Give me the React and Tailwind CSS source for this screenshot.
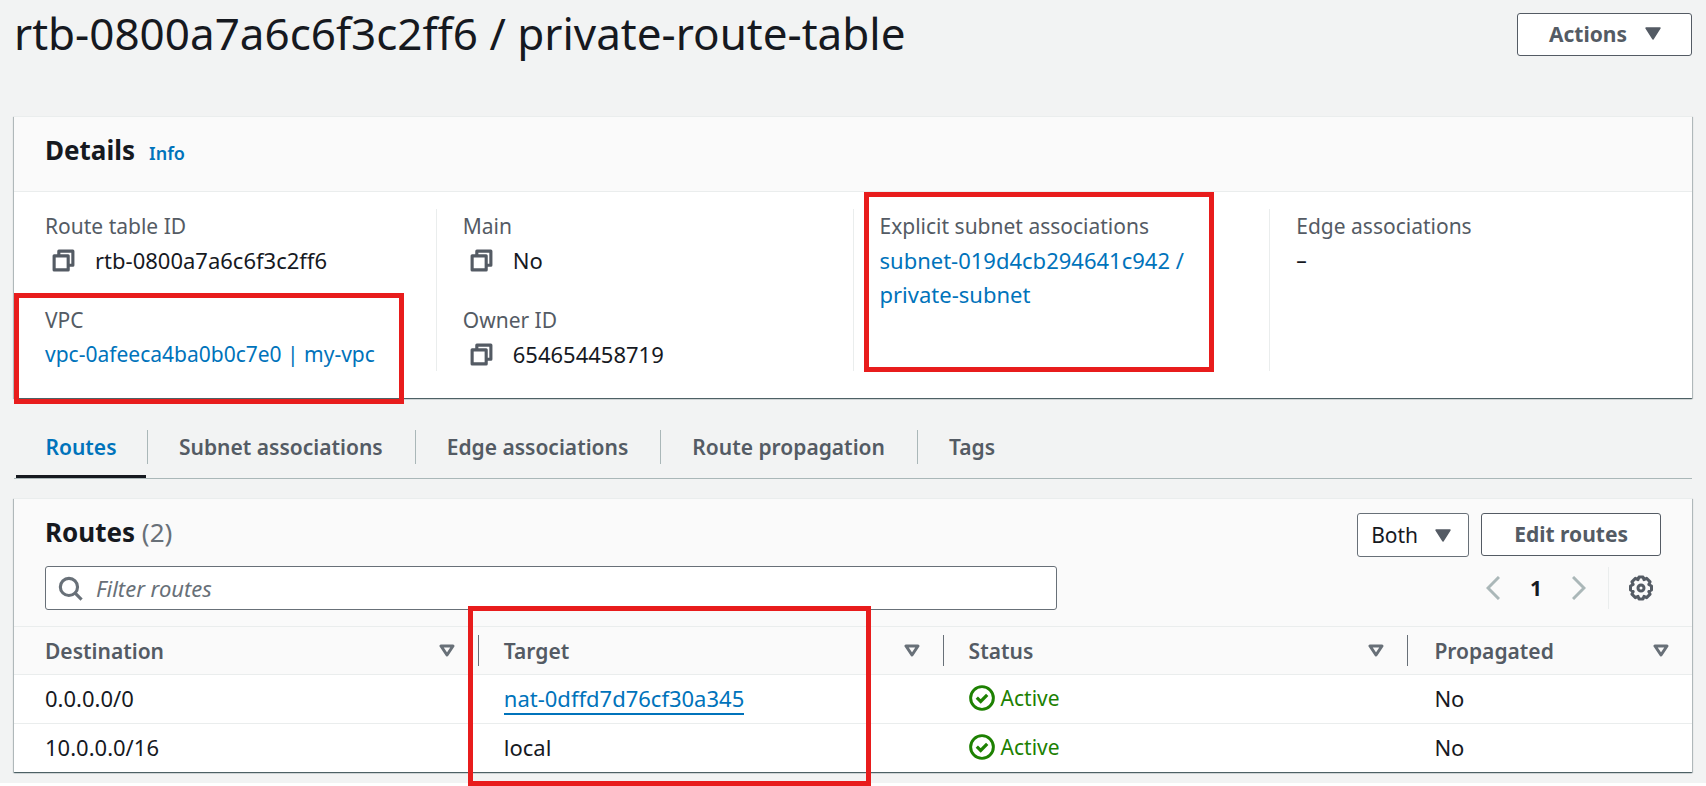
const COPY = (
  <svg viewBox="0 0 16 16" className="h-[25px] w-[25px]" fill="none" stroke="#545b64" strokeWidth="2" strokeLinejoin="round" aria-hidden="true">
    <path d="M2 5h9v9H2z" />
    <path d="M5 5V2h9v9h-3" />
  </svg>
);

function CopyValue({ children }) {
  return (
    <div className="flex items-center text-[22px]">
      <button type="button" aria-label={`Copy ${children}`} className="mr-[19px] ml-[6px] flex h-[25px] items-center">
        {COPY}
      </button>
      <span>{children}</span>
    </div>
  );
}

function Field({ label, children }) {
  return (
    <div className="relative">
      <div className="text-[#545b64]">{label}</div>
      {children}
    </div>
  );
}

function Column({ children, first }) {
  return (
    <div className={`relative flex flex-col gap-[26px] border-l pr-[27px] ${first ? "border-transparent pl-[25px]" : "border-[#eaeded] pl-[26px]"}`}>
      {children}
    </div>
  );
}

function CaretDown({ className = "" }) {
  return (
    <svg viewBox="0 0 16 13" className={`h-[13px] w-4 ${className}`} aria-hidden="true">
      <path d="M1 1h14L8 12z" fill="#545b64" stroke="#545b64" strokeWidth="1.4" strokeLinejoin="round" />
    </svg>
  );
}

const CARD =
  "border-t border-[#eaeded] bg-white shadow-[0_1px_1px_0_rgba(0,28,36,0.5),1px_1px_1px_0_rgba(0,28,36,0.2),-1px_1px_1px_0_rgba(0,28,36,0.2)]";

const MARK = "pointer-events-none absolute z-10 border-[5px] border-[#e81c1c]";

const TABS = ["Subnet associations", "Edge associations", "Route propagation", "Tags"];

function HeadCell({ children, first, last, className = "", mark }) {
  return (
    <th scope="col" className={`relative p-0 text-left font-semibold ${className}`}>
      <div className={`flex h-[31px] items-center justify-between border-[#687078] pr-[23px] ${first ? "pl-[31px]" : last ? "pl-[26px]" : "pl-[25px]"} ${last ? "" : "border-r"}`}>
        <span>{children}</span>
        <button type="button" aria-label={`Sort by ${children}`}>
          <svg viewBox="0 0 16 13" className="h-[13px] w-4" aria-hidden="true">
            <path d="M2 2h12L8 11z" fill="none" stroke="#687078" strokeWidth="3" strokeLinejoin="round" />
          </svg>
        </button>
      </div>
      {mark}
    </th>
  );
}

function Active() {
  return (
    <span className="flex items-center gap-[6px] text-[21px] text-[#1d8102]">
      <svg viewBox="0 0 16 16" className="h-[26px] w-[26px]" fill="none" stroke="#1d8102" strokeWidth="2" aria-hidden="true">
        <circle cx="8" cy="8" r="7" strokeWidth="1.8" />
        <path d="M4.8 7.800l2.400 2.300 4-4" />
      </svg>
      Active
    </span>
  );
}

export default function App() {
  return (
    <div className="min-h-screen bg-white font-['Noto_Sans','Open_Sans',sans-serif] text-[21px] leading-[34px] text-[#16191f]">
      <main className="bg-[#f2f3f3] px-[14px] pt-[5px] pb-[11px]">
        <header className="flex items-start justify-between pb-[55px]">
          <h1 className="text-[44px] leading-[56px]">rtb-0800a7a6c6f3c2ff6 / private-route-table</h1>
          <button type="button" className="mt-2 flex h-[43px] items-center gap-[18px] rounded-[3px] border border-[#545b64] bg-white pr-[30px] pb-[2px] pl-[31px] font-bold text-[#545b64]">
            Actions
            <CaretDown />
          </button>
        </header>

        <section className={CARD}>
          <div className="flex h-[75px] items-center gap-[14px] border-b border-[#eaeded] bg-[#fafafa] px-[31px] pb-2">
            <h2 className="text-[26px] font-bold">Details</h2>
            <a href="#info" className="pt-[6px] text-[18px] font-semibold text-[#0073bb]">Info</a>
          </div>
          <div className="grid grid-cols-4 pt-[17px] pr-[6px] pb-[27px] pl-[5px]">
            <Column first>
              <Field label="Route table ID">
                <CopyValue>rtb-0800a7a6c6f3c2ff6</CopyValue>
              </Field>
              <Field label="VPC">
                <a href="#vpc" className="text-[#0073bb]">vpc-0afeeca4ba0b0c7e0 | my-vpc</a>
                <div className={`${MARK} -top-[10px] -bottom-[33px] -left-[31px] w-[390px]`} />
              </Field>
            </Column>
            <Column>
              <Field label="Main">
                <CopyValue>No</CopyValue>
              </Field>
              <Field label="Owner ID">
                <CopyValue>654654458719</CopyValue>
              </Field>
            </Column>
            <Column>
              <Field label="Explicit subnet associations">
                <a href="#subnet" className="block text-[22px] text-[#0073bb]">
                  subnet-019d4cb294641c942 /<br />private-subnet
                </a>
              </Field>
              <div className={`${MARK} -top-[17px] -bottom-px left-[10px] w-[350px]`} />
            </Column>
            <Column>
              <Field label="Edge associations">
                <div>–</div>
              </Field>
            </Column>
          </div>
        </section>

        <nav className="mt-[20px] flex h-[61px] border-b border-[#aab7b8] pt-[12px] font-semibold text-[#545b64]" role="tablist">
          <button type="button" role="tab" aria-selected="true" className="ml-[2px] flex w-[130px] flex-col items-center border-b-[3px] border-[#16191f] text-[#0073bb]">
            Routes
          </button>
          {TABS.map((tab) => (
            <button key={tab} type="button" role="tab" aria-selected="false" className="ml-px h-[34px] border-l border-[#aab7b8] px-[31px]">
              {tab}
            </button>
          ))}
        </nav>

        <section className={`mt-[19px] ${CARD}`}>
          <div className="bg-[#fafafa] px-[31px] pt-[14px] pb-[16px]">
            <div className="flex items-start justify-between">
              <h2 className="text-[26px] leading-[38px] font-bold">
                Routes <span className="font-normal text-[#687078]">(2)</span>
              </h2>
              <div className="flex items-start gap-3">
                <div className="relative flex items-center">
                  <select aria-label="Route type" defaultValue="Both" className="h-[44px] w-[112px] appearance-none rounded-[3px] border border-[#687078] bg-white pl-[13px]">
                    <option>Both</option>
                  </select>
                  <CaretDown className="pointer-events-none absolute right-[18px]" />
                </div>
                <button type="button" className="h-[43px] rounded-[3px] border border-[#545b64] bg-white px-8 pb-[2px] font-bold text-[#545b64]">
                  Edit routes
                </button>
              </div>
            </div>
            <div className="mt-[9px] flex items-center justify-between">
              <label className="flex h-[44px] w-[62.6%] items-center rounded-[3px] border border-[#687078] bg-white pl-[12px]">
                <svg viewBox="0 0 16 16" className="h-[25px] w-[25px]" fill="none" stroke="#687078" strokeWidth="2" aria-hidden="true">
                  <circle cx="7" cy="7" r="5.500" />
                  <path d="M10.5 10.5l4.600 4.600" />
                </svg>
                <input type="text" aria-label="Filter routes" placeholder="Filter routes" className="ml-[13px] min-w-0 flex-1 bg-transparent text-[22px] outline-none placeholder:text-[#687078] placeholder:italic" />
              </label>
              <div className="flex h-[44px] items-center pr-[7px]">
                <button type="button" aria-label="Previous page">
                  <svg viewBox="0 0 14 24" className="h-6 w-[14px]" fill="none" stroke="#aab7b8" strokeWidth="3" aria-hidden="true">
                    <path d="M13 1L2 12l11 11" />
                  </svg>
                </button>
                <button type="button" className="w-[72px] text-center font-bold">1</button>
                <button type="button" aria-label="Next page">
                  <svg viewBox="0 0 14 24" className="h-6 w-[14px]" fill="none" stroke="#aab7b8" strokeWidth="3" aria-hidden="true">
                    <path d="M1 1l11 11L1 23" />
                  </svg>
                </button>
                <span className="ml-[22px] h-[42px] w-px bg-[#eaeded]" />
                <button type="button" aria-label="Preferences" className="ml-[19px]">
                  <svg viewBox="0 0 26 26" className="h-[26px] w-[26px]" fill="none" stroke="#545b64" strokeWidth="3" strokeLinejoin="round" aria-hidden="true">
                    <path d="M11 2h4l1 2.600 2.600-1.200 3.500 3.500-1.300 2.600 2.700 1.500v4l-2.700 1.500 1.300 2.600-3.500 3.500-2.600-1.200-1 2.600h-4l-1-2.600-2.600 1.200-3.500-3.500 1.300-2.600L2.500 15v-4l2.700-1.500-1.300-2.600 3.500-3.500L10 4.600z" />
                    <circle cx="13" cy="13" r="3" />
                  </svg>
                </button>
              </div>
            </div>
          </div>
          <table className="w-full table-fixed border-collapse">
            <thead className="border-y border-[#eaeded] bg-[#fafafa] text-[#545b64]">
              <tr className="h-[48px]">
                <HeadCell first className="w-[27.7%]">Destination</HeadCell>
                <HeadCell
                  className="w-[27.7%]"
                  mark={<div className={`${MARK} -top-[21px] -left-[11px] h-[180px] w-[403px]`} />}
                >
                  Target
                </HeadCell>
                <HeadCell className="w-[27.7%]">Status</HeadCell>
                <HeadCell last>Propagated</HeadCell>
              </tr>
            </thead>
            <tbody className="text-[22px]">
              <tr className="h-[49px] border-b border-[#eaeded]">
                <td className="p-0 pb-[2px] pl-[31px]">0.0.0.0/0</td>
                <td className="p-0 pb-[2px] pl-[25px]">
                  <a href="#nat" className="border-b-2 border-[#0073bb] leading-[26px] text-[#0073bb]">nat-0dffd7d76cf30a345</a>
                </td>
                <td className="p-0 pb-[2px] pl-[25px]"><Active /></td>
                <td className="p-0 pb-[2px] pl-[26px]">No</td>
              </tr>
              <tr className="h-[48px]">
                <td className="p-0 pb-[2px] pl-[31px]">10.0.0.0/16</td>
                <td className="p-0 pb-[2px] pl-[25px]">local</td>
                <td className="p-0 pb-[2px] pl-[25px]"><Active /></td>
                <td className="p-0 pb-[2px] pl-[26px]">No</td>
              </tr>
            </tbody>
          </table>
        </section>
      </main>
    </div>
  );
}
